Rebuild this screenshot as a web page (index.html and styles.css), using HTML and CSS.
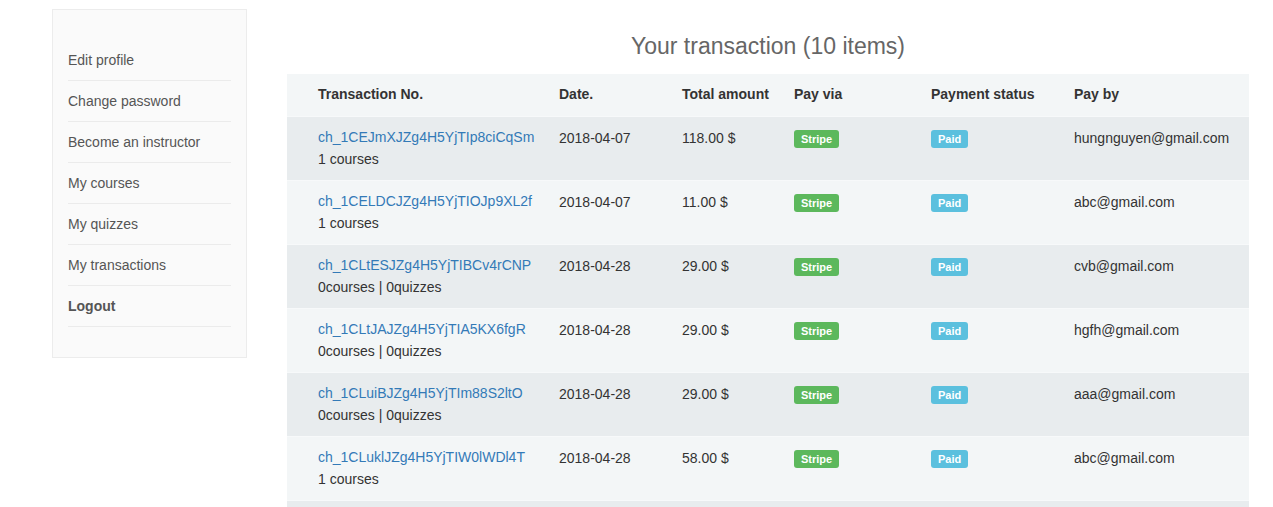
FILE: index.html
```html
<!DOCTYPE html>
<html>
<head>
<meta charset="utf-8">
<title>Your transactions</title>
<link rel="stylesheet" href="styles.css">
</head>
<body>
<div class="page">
  <aside class="sidebar">
    <ul class="menu">
      <li><a href="#">Edit profile</a></li>
      <li><a href="#">Change password</a></li>
      <li><a href="#">Become an instructor</a></li>
      <li><a href="#">My courses</a></li>
      <li><a href="#">My quizzes</a></li>
      <li><a href="#">My transactions</a></li>
      <li><a href="#" class="logout">Logout</a></li>
    </ul>
  </aside>
  <main class="main">
    <h2 class="title">Your transaction (10 items)</h2>
    <table class="tx">
      <colgroup>
        <col class="c1"><col class="c2"><col class="c3"><col class="c4"><col class="c5"><col class="c6">
      </colgroup>
      <thead>
        <tr><th>Transaction No.</th><th>Date.</th><th>Total amount</th><th>Pay via</th><th>Payment status</th><th>Pay by</th></tr>
      </thead>
      <tbody>
        <tr>
          <td><a href="#">ch_1CEJmXJZg4H5YjTIp8ciCqSm</a><br>1 courses</td>
          <td>2018-04-07</td><td>118.00 $</td>
          <td><span class="label stripe">Stripe</span></td>
          <td><span class="label paid">Paid</span></td>
          <td>hungnguyen@gmail.com</td>
        </tr>
        <tr>
          <td><a href="#">ch_1CELDCJZg4H5YjTIOJp9XL2f</a><br>1 courses</td>
          <td>2018-04-07</td><td>11.00 $</td>
          <td><span class="label stripe">Stripe</span></td>
          <td><span class="label paid">Paid</span></td>
          <td>abc@gmail.com</td>
        </tr>
        <tr>
          <td><a href="#">ch_1CLtESJZg4H5YjTIBCv4rCNP</a><br>0courses | 0quizzes</td>
          <td>2018-04-28</td><td>29.00 $</td>
          <td><span class="label stripe">Stripe</span></td>
          <td><span class="label paid">Paid</span></td>
          <td>cvb@gmail.com</td>
        </tr>
        <tr>
          <td><a href="#">ch_1CLtJAJZg4H5YjTIA5KX6fgR</a><br>0courses | 0quizzes</td>
          <td>2018-04-28</td><td>29.00 $</td>
          <td><span class="label stripe">Stripe</span></td>
          <td><span class="label paid">Paid</span></td>
          <td>hgfh@gmail.com</td>
        </tr>
        <tr>
          <td><a href="#">ch_1CLuiBJZg4H5YjTIm88S2ltO</a><br>0courses | 0quizzes</td>
          <td>2018-04-28</td><td>29.00 $</td>
          <td><span class="label stripe">Stripe</span></td>
          <td><span class="label paid">Paid</span></td>
          <td>aaa@gmail.com</td>
        </tr>
        <tr>
          <td><a href="#">ch_1CLuklJZg4H5YjTIW0lWDl4T</a><br>1 courses</td>
          <td>2018-04-28</td><td>58.00 $</td>
          <td><span class="label stripe">Stripe</span></td>
          <td><span class="label paid">Paid</span></td>
          <td>abc@gmail.com</td>
        </tr>
        <tr class="more">
          <td colspan="6"></td>
        </tr>
      </tbody>
    </table>
  </main>
</div>
</body>
</html>
```

FILE: styles.css
```css
html, body {
  margin: 0;
  padding: 0;
  background: #fff;
}
body {
  font-family: "Liberation Sans", Arial, sans-serif;
  font-size: 14px;
  color: #333;
}
.page {
  display: flex;
  align-items: flex-start;
  padding: 9px 0 0 52px;
  gap: 40px;
}
.sidebar {
  width: 163px;
  flex: none;
  background: #fafafa;
  border: 1px solid #ececec;
  padding: 30px 15px 30px;
}
.menu {
  list-style: none;
  margin: 0;
  padding: 0;
}
.menu li {
  border-bottom: 1px solid #ebebeb;
}
.menu a {
  display: block;
  padding: 10px 0;
  line-height: 20px;
  color: #555;
  text-decoration: none;
}
.menu a.logout {
  font-weight: bold;
}
.main {
  width: 962px;
  flex: none;
}
.title {
  margin: 0 0 13px;
  padding-top: 22px;
  font-size: 23px;
  font-weight: normal;
  line-height: 30px;
  text-align: center;
  color: #666;
}
.tx {
  width: 962px;
  border-collapse: collapse;
  table-layout: fixed;
}
.c1 { width: 264px; }
.c2 { width: 123px; }
.c3 { width: 112px; }
.c4 { width: 137px; }
.c5 { width: 143px; }
.c6 { width: 183px; }
.tx th {
  text-align: left;
  font-weight: bold;
  color: #333;
  padding: 10px 8px 12px;
  line-height: 20px;
  background: #f3f6f7;
}
.tx td {
  padding: 10px 8px;
  line-height: 22px;
  vertical-align: top;
  color: #333;
  white-space: nowrap;
}
.tx th:first-child,
.tx td:first-child {
  padding-left: 31px;
}
.tx tbody tr {
  border-top: 1px solid #f7f9fa;
}
.tx tbody tr:nth-child(odd) td {
  background: #e8ecee;
}
.tx tbody tr:nth-child(even) td {
  background: #f3f6f7;
}
.tx td:first-child {
  padding-top: 9px;
}
.tx tr.more td {
  padding: 0;
  height: 10px;
  line-height: 10px;
}
.tx a {
  color: #337ab7;
  text-decoration: none;
}
.label {
  display: inline-block;
  vertical-align: top;
  margin-top: 3px;
  padding: 3px 7px 3px;
  font-size: 11px;
  font-weight: bold;
  line-height: 12px;
  color: #fff;
  border-radius: 3px;
}
.stripe { background: #5cb85c; }
.paid { background: #5bc0de; }
```
